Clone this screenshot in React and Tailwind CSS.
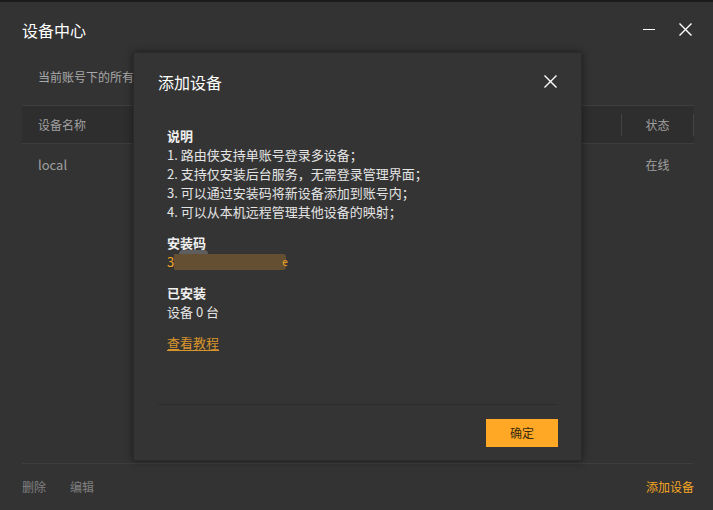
import React from "react";

const font = { fontFamily: '"Noto Sans CJK SC", "Noto Sans", sans-serif' };

function XIcon({ size = 13, className = "" }) {
  return (
    <svg width={size} height={size} viewBox="0 0 13 13" className={className}>
      <path d="M1 1 L12 12 M12 1 L1 12" stroke="currentColor" strokeWidth="1.4" strokeLinecap="square" />
    </svg>
  );
}

export default function App() {
  return (
    <div
      className="relative w-[713px] h-[510px] overflow-hidden bg-[#333333] flex flex-col"
      style={font}
    >
      <div className="h-[2px] bg-[#1b1b1b]" />
      {/* header */}
      <div className="h-[55px] flex items-center pl-[22px] pr-[21px]">
        <div className="text-[16px] leading-none text-white">设备中心</div>
        <div className="ml-auto flex items-center gap-[24px] text-white">
          <div className="w-[12px] h-[1px] bg-white" />
          <XIcon size={13} />
        </div>
      </div>
      {/* subtitle */}
      <div className="h-[40px] flex items-center pl-[38px] text-[12px] text-[#a9a9a9] leading-none">
        当前账号下的所有
      </div>
      {/* table */}
      <div className="mt-[8px] mx-[22px] w-[672px]">
        <div className="flex items-center h-[39px] border-t border-b border-[#3e3e3e] bg-[#2e2e2e] text-[12px] text-[#a0a0a0]">
          <div className="flex-1 pl-[16px]">设备名称</div>
          <div className="w-[1px] h-[22px] bg-[#444444]" />
          <div className="w-[71px] text-center">状态</div>
          <div className="w-[1px] h-[22px] bg-[#444444]" />
        </div>
        <div className="flex items-center h-[41px] text-[12px] text-[#a0a0a0]">
          <div className="flex-1 pl-[16px] text-[13px]">local</div>
          <div className="w-[73px] text-center">在线</div>
        </div>
      </div>
      <div className="flex-1" />
      {/* footer */}
      <div className="mx-[22px] w-[671px] h-[1px] bg-[#3e3e3e]" />
      <div className="h-[46px] flex items-center px-[22px] text-[12px]">
        <span className="text-[#808080]">删除</span>
        <span className="ml-[24px] text-[#808080]">编辑</span>
        <span className="ml-auto text-[#f5a623] mr-[-3px]">添加设备</span>
      </div>

      {/* modal */}
      <div className="absolute left-[133px] top-[52px] w-[449px] h-[409px] bg-[#343434] border border-[#2a2a2a] shadow-[0_0_8px_rgba(0,0,0,0.45)] flex flex-col">
        <div className="h-[57px] flex items-center pl-[24px] pr-[24px]">
          <div className="text-[16px] leading-none text-white">添加设备</div>
          <div className="ml-auto text-white">
            <XIcon size={13} />
          </div>
        </div>
        <div className="flex-1 pt-[16px] pl-[33px] text-[13px] leading-[19px] text-[#e4e4e4]">
          <div className="font-bold text-[#f0f0f0]">说明</div>
          <div>1. 路由侠支持单账号登录多设备；</div>
          <div>2. 支持仅安装后台服务，无需登录管理界面；</div>
          <div>3. 可以通过安装码将新设备添加到账号内；</div>
          <div>4. 可以从本机远程管理其他设备的映射；</div>

          <div className="mt-[12px] font-bold text-[#f0f0f0]">安装码</div>
          <div className="relative flex items-center h-[19px] text-[#f5a623]">
            <span>3</span>
            <div className="relative w-[112px] h-[19px]">
              <div className="absolute left-[5px] top-[-2px] w-[29px] h-[6px] rounded-t-[4px] bg-[#5e5e5e] blur-[0.5px]" />
              <div className="absolute left-[0px] top-[2px] w-[112px] h-[16px] rounded-r-[3px] bg-[#654f33] blur-[0.5px]" />
            </div>
            <span className="text-[10px] ml-[-4px] relative">e</span>
          </div>

          <div className="mt-[12px] font-bold text-[#f0f0f0]">已安装</div>
          <div>设备 0 台</div>

          <div className="mt-[12px]">
            <span className="text-[#d9952b] underline underline-offset-[2px]">查看教程</span>
          </div>
        </div>
        <div className="mx-[24px] h-[1px] bg-[#2c2c2c]" />
        <div className="flex justify-end px-[23px] pt-[14px] pb-[13px]">
          <div className="w-[72px] h-[28px] bg-[#ffa826] flex items-center justify-center text-[12px] text-[#3a2a10]">
            确定
          </div>
        </div>
      </div>
    </div>
  );
}
